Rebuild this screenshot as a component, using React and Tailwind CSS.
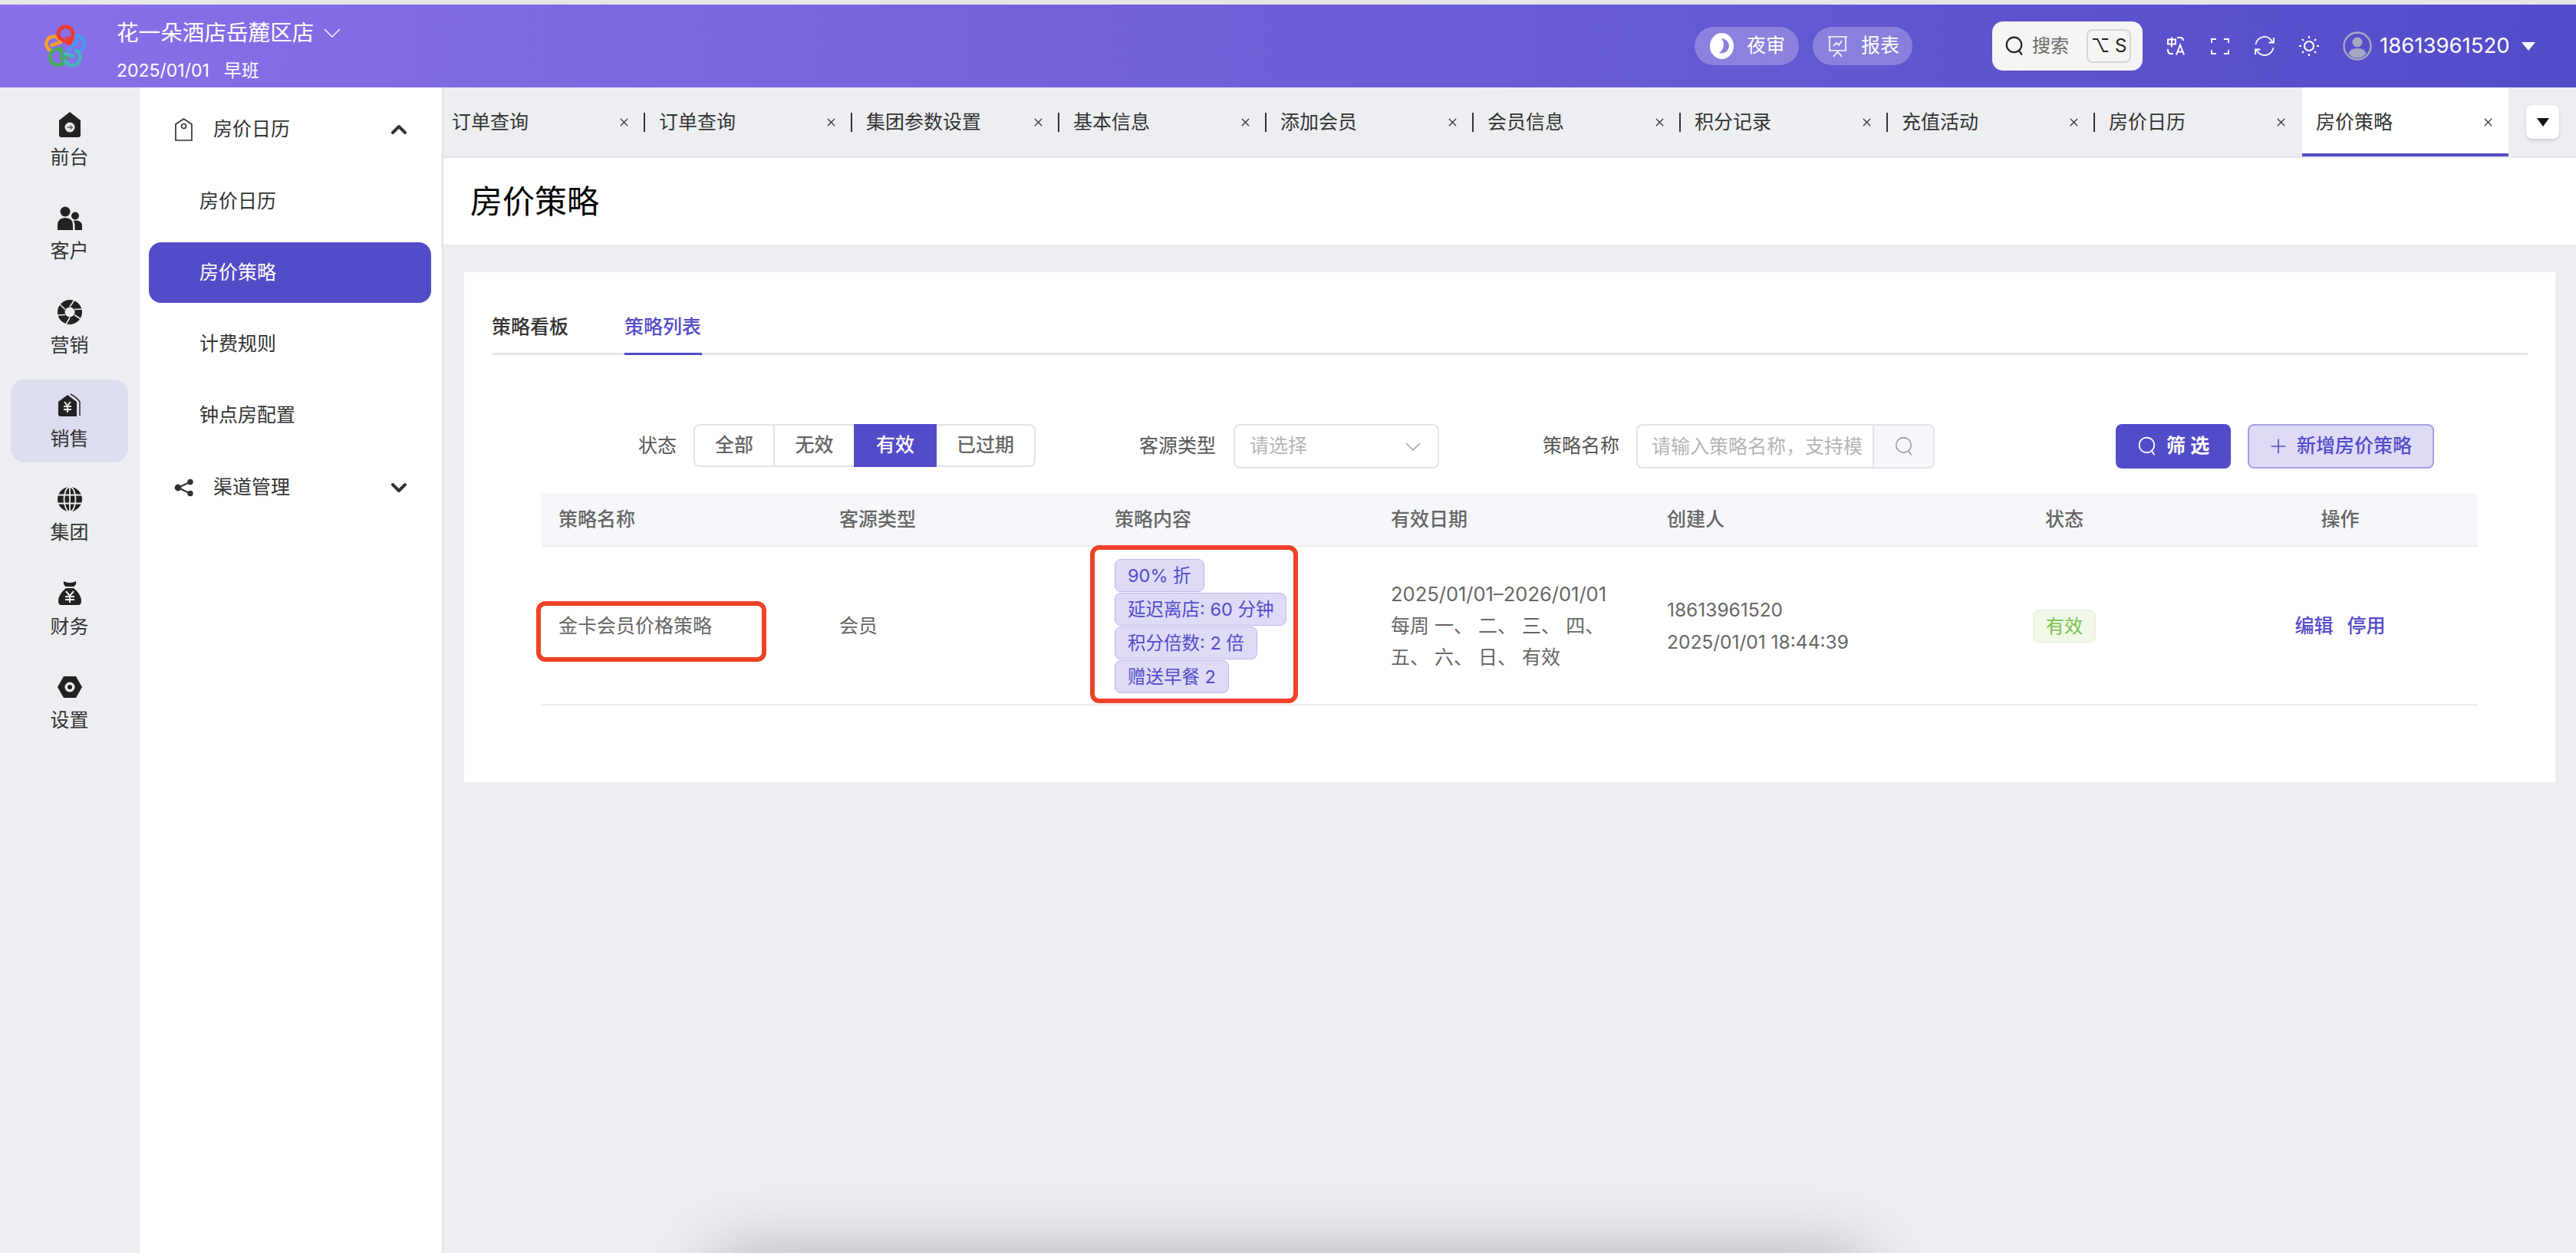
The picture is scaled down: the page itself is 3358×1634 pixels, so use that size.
import { Plus, ChevronDown, ChevronUp, X } from "lucide-react";

const railItems = [
  { label: "前台", icon: "desk" },
  { label: "客户", icon: "users" },
  { label: "营销", icon: "lens" },
  { label: "销售", icon: "sale", active: true },
  { label: "集团", icon: "globe" },
  { label: "财务", icon: "bag" },
  { label: "设置", icon: "nut" },
];

const tabs = ["订单查询", "订单查询", "集团参数设置", "基本信息", "添加会员", "会员信息", "积分记录", "充值活动", "房价日历", "房价策略"];

const tags = ["90% 折", "延迟离店: 60 分钟", "积分倍数: 2 倍", "赠送早餐 2"];

const tableCols = "grid-cols-[366px_359px_360px_360px_338px_360px_359px]";

function RailIcon({ name }) {
  if (name === "desk")
    return (
      <svg width="28" height="33" viewBox="0 0 28 33">
        <path d="M14 0 L28 11 V30 Q28 33 25 33 H3 Q0 33 0 30 V11 Z" fill="#222" />
        <circle cx="14" cy="20" r="6.5" fill="#e8e8ec" />
        <path d="M10.5 20h6.5M14.5 17.5l2.8 2.5-2.8 2.5" stroke="#666" strokeWidth="1.4" fill="none" />
      </svg>
    );
  if (name === "users")
    return (
      <svg width="32" height="31" viewBox="0 0 32 31">
        <circle cx="10" cy="7" r="6.5" fill="#222" />
        <circle cx="23" cy="12.5" r="5" fill="#222" />
        <path d="M0 31 V25 Q0 15 10 15 Q20 15 20 25 V31 Z" fill="#222" />
        <path d="M22.5 31 V24 Q22.5 21 20.5 19 Q22 18.5 24 18.5 Q32 18.5 32 26 V31 Z" fill="#222" />
      </svg>
    );
  if (name === "lens")
    return (
      <svg width="32" height="32" viewBox="0 0 32 32">
        <circle cx="16" cy="16" r="16" fill="#222" />
        <g stroke="#edeef2" strokeWidth="1.6">
          <path d="M16 9 L22 0M22 12.5 L32 12M22 19.5 L30 25M16 23 L11 32M10 19.5 L0 20M10 12.5 L3 6" />
        </g>
        <circle cx="16" cy="16" r="6.5" fill="#edeef2" />
      </svg>
    );
  if (name === "sale")
    return (
      <svg width="30" height="31" viewBox="0 0 30 31">
        <path d="M16 1 Q24 5 28 11 V29" fill="none" stroke="#222" strokeWidth="1.4" />
        <path d="M12 2 L24 11 V30 H3 Q0 30 0 27 V11 Z" fill="#222" />
        <path d="M8 11 L12 16 L16 11M7 17h10M7 21h10M12 16v9" stroke="#edeef2" strokeWidth="2" fill="none" />
      </svg>
    );
  if (name === "globe")
    return (
      <svg width="32" height="32" viewBox="0 0 32 32">
        <circle cx="16" cy="16" r="16" fill="#222" />
        <g stroke="#edeef2" strokeWidth="1.8" fill="none">
          <ellipse cx="16" cy="16" rx="7.5" ry="16" />
          <path d="M16 0v32M0 10.5h32M0 21.5h32" />
        </g>
      </svg>
    );
  if (name === "bag")
    return (
      <svg width="30" height="31" viewBox="0 0 30 31">
        <path d="M7 0 Q15 4 23 0 Q24 5 20 7 H10 Q6 5 7 0 Z" fill="#222" />
        <path d="M10 9 H20 Q30 17 30 26 Q30 31 26 31 H4 Q0 31 0 26 Q0 17 10 9 Z" fill="#222" />
        <path d="M10 13 L15 19 L20 13M9 20h12M9 24h12M15 19v9" stroke="#edeef2" strokeWidth="2" fill="none" />
      </svg>
    );
  return (
    <svg width="32" height="28" viewBox="0 0 32 28">
      <path d="M8 0 H24 L32 14 L24 28 H8 L0 14 Z" fill="#222" />
      <circle cx="16" cy="14" r="6.5" fill="#edeef2" />
      <circle cx="16" cy="14" r="3" fill="#222" />
    </svg>
  );
}

function SearchGlyph({ size, className, strokeWidth = 1.6 }) {
  return (
    <svg width={size} height={size} viewBox="0 0 24 24" fill="none" stroke="currentColor" strokeWidth={strokeWidth} strokeLinecap="round" className={className}>
      <circle cx="11.5" cy="10.5" r="9" />
      <path d="M17.5 17.5 L20.5 22" />
    </svg>
  );
}

function Logo() {
  return (
    <svg width="60" height="60" viewBox="0 0 60 60" fill="none" strokeWidth="4.6" strokeLinecap="round" strokeLinejoin="round">
      <path d="M12 29 L24 25 A9.5 9.5 0 1 0 14 36.5" stroke="#f5a030" />
      <path d="M40 18 A10 10 0 1 1 43 36.5 M34 36 L46 23" stroke="#4a98f5" />
      <path d="M21 34 A10.5 10.5 0 1 0 31 44 M25 33 V47" stroke="#47ac5e" />
      <path d="M30 40 L41 43.5 M45 36 A10.5 10.5 0 1 1 30 50" stroke="#46b5bd" />
      <path d="M36 27 L23 20 A9.5 9.5 0 1 1 39.5 17.5 Z" stroke="#ee3a2c" />
      <path d="M36 26 L30 19 L37 18 Z" fill="#ee3a2c" stroke="#ee3a2c" strokeWidth="1" />
    </svg>
  );
}

export default function App() {
  return (
    <div
      className="relative h-[1634px] w-[3358px] overflow-hidden bg-[#edeef2] text-[25px] text-[#333]"
      style={{ fontFamily: "Inter, 'Noto Sans CJK SC', sans-serif" }}
    >
      <div className="h-[6px] bg-[#e6e6e6]" />

      {/* Header */}
      <header className="flex h-[108px] items-center bg-gradient-to-r from-[#8a70e8] to-[#534cc9] text-white">
        <div className="ml-[55px] w-[97px] shrink-0">
          <Logo />
        </div>
        <div className="flex flex-col pt-[11px]">
          <div className="flex items-center gap-[13px] text-[28.6px] leading-[40px]">
            花一朵酒店岳麓区店
            <svg width="22" height="12" viewBox="0 0 22 12" fill="none" stroke="#fff" strokeWidth="1.4">
              <path d="M1 1 L11 11 L21 1" />
            </svg>
          </div>
          <div className="mt-[13px] flex gap-[19px] text-[23px] leading-[32px]">
            <span>2025/01/01</span>
            <span>早班</span>
          </div>
        </div>

        <div className="ml-auto flex h-[50px] w-[136px] items-center gap-[17px] rounded-full bg-white/25 pl-[20px] text-[25px]">
          <svg width="31" height="34" viewBox="0 0 31 34">
            <ellipse cx="15.5" cy="17" rx="15.5" ry="17" fill="#fff" />
            <path d="M15 7 A10 10 0 0 1 25 17 A10 10 0 0 1 12 26 A13 13 0 0 0 15 7 Z" fill="#8a80df" />
          </svg>
          夜审
        </div>
        <div className="ml-[18px] flex h-[50px] w-[130px] items-center gap-[18px] rounded-full bg-white/25 pl-[20px] text-[25px]">
          <svg width="25" height="30" viewBox="0 0 25 30" fill="none" stroke="#fff" strokeWidth="1.6">
            <path d="M0 3h25M2 3v18h21V3M12.5 21v3M7 29l4-5h3l4 5M7 15l4-4 3 3 4-6" />
          </svg>
          报表
        </div>

        <div className="ml-[104px] flex h-[64px] w-[196px] items-center rounded-[14px] bg-[#f5f5f3] pl-[16px] text-[#6b6b6b]">
          <SearchGlyph size={26} strokeWidth={2} className="text-[#222]" />
          <span className="ml-[10px] text-[24px]">搜索</span>
          <span className="ml-[23px] flex h-[44px] w-[58px] items-center justify-center rounded-[8px] border-2 border-[#d6d6d4] text-[24px] text-[#222]">
            ⌥ S
          </span>
        </div>

        <div className="ml-[14px] flex w-[58px] justify-center">
          <svg width="25" height="24" viewBox="0 0 25 24" fill="none" stroke="#fff" strokeWidth="2">
            <path d="M2 3.5h10v6H2zM7 0.5v13M14 1h4q4 0 4 4M2 16v2q0 4 4 4h3M13 23.5l5-13 5 13M15 19.5h6" />
          </svg>
        </div>
        <div className="flex w-[58px] justify-center">
          <svg width="24" height="21" viewBox="0 0 24 21" fill="none" stroke="#fff" strokeWidth="2">
            <path d="M1 6V1h6M17 1h6v5M23 15v5h-6M7 20H1v-5" />
          </svg>
        </div>
        <div className="flex w-[58px] justify-center">
          <svg width="28" height="26" viewBox="0 0 28 26" fill="none" stroke="#fff" strokeWidth="1.8">
            <path d="M2.5 11 A11.5 11.5 0 0 1 24.5 8 M26 2 V8.5 H19.5 M25.5 15 A11.5 11.5 0 0 1 3.5 18 M2 24 V17.5 H8.5" />
          </svg>
        </div>
        <div className="flex w-[58px] justify-center">
          <svg width="26" height="26" viewBox="0 0 26 26" fill="none" stroke="#fff" strokeWidth="2.2">
            <circle cx="13" cy="13" r="6" />
            <path d="M13 0v3M13 23v3M0 13h3M23 13h3M4 4l2 2M20 20l2 2M4 22l2-2M20 6l2-2" />
          </svg>
        </div>

        <svg width="38" height="38" viewBox="0 0 38 38" className="ml-[15px]">
          <circle cx="19" cy="19" r="17.5" fill="none" stroke="#a6a8c0" strokeWidth="2.4" />
          <circle cx="19" cy="14" r="6.5" fill="#a6a8c0" />
          <path d="M7.5 29 Q9 22 19 22 Q29 22 30.5 29 Q26 34.5 19 34.5 Q12 34.5 7.5 29 Z" fill="#a6a8c0" />
        </svg>
        <span className="ml-[10px] w-[172px] text-[27.5px]">18613961520</span>
        <span className="ml-[13px] mr-[53px] h-0 w-0 border-x-[9px] border-t-[11px] border-x-transparent border-t-white" />
      </header>

      <div className="flex h-[1520px]">
        {/* Rail */}
        <nav className="flex w-[182px] shrink-0 flex-col gap-[14.33px] border-r border-[#dfe3ee] px-[14px] pt-[14px]">
          {railItems.map((item) => (
            <div
              key={item.label}
              className={`flex h-[108px] flex-col items-center justify-start rounded-[18px] pt-[17px] ${item.active ? "bg-[#dcddee]" : ""}`}
            >
              <div className="flex h-[34px] items-center">
                <RailIcon name={item.icon} />
              </div>
              <span className="mt-[9px] leading-[34px] text-[#333]">{item.label}</span>
            </div>
          ))}
        </nav>

        {/* Second level menu */}
        <aside className="w-[396px] shrink-0 border-r-2 border-[#dfe3ee] bg-white pl-[12px] pr-[14px] pt-[15px]">
          <div className="flex h-[80px] items-center pl-[34px] pr-[26px]">
            <svg width="23" height="30" viewBox="0 0 23 30" fill="none" stroke="#333" strokeWidth="1.7">
              <path d="M11.5 1 L22 8 V29 H1 V8 Z" />
              <circle cx="11.5" cy="10.5" r="3" />
            </svg>
            <span className="ml-[27px]">房价日历</span>
            <ChevronUp size={32} strokeWidth={3} className="ml-auto" />
          </div>
          <div className="mt-[14px] flex h-[79px] items-center pl-[66px]">房价日历</div>
          <div className="mt-[14px] flex h-[79px] items-center rounded-[16px] bg-[#534cc9] pl-[66px] text-white">房价策略</div>
          <div className="mt-[14px] flex h-[79px] items-center pl-[66px]">计费规则</div>
          <div className="mt-[14px] flex h-[79px] items-center pl-[66px]">钟点房配置</div>
          <div className="mt-[15px] flex h-[80px] items-center pl-[33px] pr-[26px]">
            <svg width="26" height="24" viewBox="0 0 26 24" fill="#333" stroke="#333" strokeWidth="2">
              <circle cx="5" cy="12" r="3.4" />
              <circle cx="21" cy="4.5" r="2.8" />
              <circle cx="21" cy="19.5" r="2.8" />
              <path d="M5 12 L21 4.5M5 12 L21 19.5" fill="none" />
            </svg>
            <span className="ml-[25px]">渠道管理</span>
            <ChevronDown size={32} strokeWidth={3} className="ml-auto" />
          </div>
        </aside>

        <main className="min-w-0 flex-1">
          {/* Tab strip */}
          <div className="flex h-[92px] border-b-2 border-[#e3e4ea] pr-[22px]">
            <div className="flex min-w-0 flex-1 overflow-hidden">
              <div className="-ml-[7px] flex">
                {tabs.map((t, i) => {
                  const active = i === tabs.length - 1;
                  return (
                    <div
                      key={i}
                      className={`relative flex h-[90px] w-[270px] shrink-0 items-center pl-[18px] pr-[19px] pt-[1px] ${active ? "bg-white" : ""}`}
                    >
                      <span className="text-[#333]">{t}</span>
                      <X size={17} strokeWidth={1.8} className="ml-auto text-[#333]" />
                      {active && <span className="absolute bottom-0 left-0 h-[4px] w-full bg-[#534cc9]" />}
                      {!active && i < tabs.length - 2 && <span className="absolute right-0 top-[33px] h-[25px] w-[2px] bg-[#333]" />}
                    </div>
                  );
                })}
              </div>
            </div>
            <div className="ml-[23px] mt-[23px] flex h-[44px] w-[43px] items-center justify-center rounded-[8px] bg-white shadow-[0_2px_4px_rgba(0,0,0,0.15)]">
              <span className="h-0 w-0 border-x-[8px] border-t-[11px] border-x-transparent border-t-[#111]" />
            </div>
          </div>

          {/* Title */}
          <div className="flex h-[113px] items-center bg-white pl-[35px] text-[42px] leading-none text-black">房价策略</div>

          {/* Card */}
          <section className="ml-[27px] mr-[27px] mt-[36px] h-[665px] bg-white px-[36px] pt-[53px]">
            <div className="flex h-[55px] gap-[73px] border-b-[3px] border-[#e5e6ec] text-[25px]">
              <div className="font-medium text-[#333]">策略看板</div>
              <div className="relative h-[55px] w-[101px] font-medium text-[#534cc9]">
                策略列表
                <span className="absolute bottom-0 left-0 h-[3px] w-full bg-[#534cc9]" />
              </div>
            </div>

            {/* Filters */}
            <div className="mt-[90px] flex h-[58px] items-center pl-[191px] text-[#555]">
              <span>状态</span>
              <div className="ml-[22px] flex h-[56px] w-[446px] self-start rounded-[8px] border-2 border-[#e3e4ea] font-medium text-[#666]">
                <span className="flex w-[104px] items-center justify-center border-r-2 border-[#e3e4ea]">全部</span>
                <span className="flex w-[103px] items-center justify-center">无效</span>
                <span className="-my-[2px] flex w-[108px] items-center justify-center bg-[#534cc9] text-white">有效</span>
                <span className="flex flex-1 items-center justify-center">已过期</span>
              </div>
              <span className="ml-[135px]">客源类型</span>
              <div className="ml-[23px] flex h-[58px] w-[268px] items-center justify-between rounded-[8px] border-2 border-[#e3e4ea] pl-[19px] pr-[22px] text-[#b5b5b8]">
                请选择
                <svg width="20" height="11" viewBox="0 0 20 11" fill="none" stroke="#999" strokeWidth="1.3">
                  <path d="M1 1 L10 10 L19 1" />
                </svg>
              </div>
              <span className="ml-[135px]">策略名称</span>
              <div className="ml-[22px] flex h-[58px] w-[389px] overflow-hidden rounded-[8px] border-2 border-[#e3e4ea]">
                <span className="w-[306px] whitespace-nowrap pl-[18px] leading-[54px] text-[#b5b5b8]">请输入策略名称，支持模</span>
                <span className="flex flex-1 items-center justify-center border-l-2 border-[#e3e4ea] bg-[#f6f7fb]">
                  <SearchGlyph size={26} strokeWidth={1.4} className="text-[#999]" />
                </span>
              </div>
              <button className="ml-[236px] flex h-[58px] w-[150px] items-center justify-center gap-[12px] rounded-[8px] bg-[#534cc9] font-semibold text-white">
                <SearchGlyph size={26} strokeWidth={1.6} />
                筛 选
              </button>
              <button className="ml-[22px] flex h-[58px] w-[243px] items-center gap-[9px] rounded-[8px] border-2 border-[#a59fe6] bg-[#dedbf7] pl-[23px] font-medium text-[#534cc9]">
                <Plus size={30} strokeWidth={1.3} />
                新增房价策略
              </button>
            </div>

            {/* Table */}
            <div className="ml-[65px] mt-[32px] w-[2524px]">
              <div className={`grid h-[70px] items-center border-b-2 border-[#ecedf2] bg-[#f6f7fb] pl-[22px] pt-[2px] font-medium text-[#666] ${tableCols}`}>
                <span>策略名称</span>
                <span>客源类型</span>
                <span>策略内容</span>
                <span>有效日期</span>
                <span>创建人</span>
                <span className="text-center">状态</span>
                <span className="text-center">操作</span>
              </div>
              <div className={`relative grid h-[207px] items-center border-b-2 border-[#ecedf2] pl-[22px] pt-[2px] text-[#666] ${tableCols}`}>
                <span>金卡会员价格策略</span>
                <span>会员</span>
                <div className="flex flex-col items-start gap-[1px]">
                  {tags.map((tag) => (
                    <span key={tag} className="flex h-[43px] items-center whitespace-nowrap rounded-[8px] border border-[#bdb8ec] bg-[#dedbf7] px-[16px] text-[23.5px] text-[#534cc9]">
                      {tag}
                    </span>
                  ))}
                </div>
                <div className="whitespace-nowrap text-[25.5px] leading-[41.5px]">
                  <div>2025/01/01–2026/01/01</div>
                  <div className="text-[25px]">每周 一、 二、 三、 四、</div>
                  <div className="text-[25px]">五、 六、 日、 有效</div>
                </div>
                <div className="whitespace-nowrap text-[24.5px] leading-[41.5px]">
                  <div>18613961520</div>
                  <div>2025/01/01 18:44:39</div>
                </div>
                <div className="flex justify-center">
                  <span className="flex h-[43px] w-[82px] items-center justify-center rounded-[8px] border border-[#e3f0d5] bg-[#f0f8e8] text-[24px] text-[#79c14d]">有效</span>
                </div>
                <div className="flex justify-center gap-[18px] font-medium text-[#534cc9]">
                  <span>编辑</span>
                  <span>停用</span>
                </div>

                {/* red annotations drawn over the row */}
                <span className="absolute left-[-7px] top-[71px] h-[79px] w-[300px] rounded-[12px] border-[6px] border-[#ee4227]" />
                <span className="absolute left-[715px] top-[-2px] h-[206px] w-[271px] rounded-[12px] border-[6px] border-[#ee4227]" />
              </div>
            </div>
          </section>
        </main>
      </div>

      {/* window shadow coming up from below the page */}
      <div className="absolute left-[930px] top-[1634px] h-[100px] w-[1500px] shadow-[0_0_90px_0_rgba(0,0,0,0.25)]" />
    </div>
  );
}
